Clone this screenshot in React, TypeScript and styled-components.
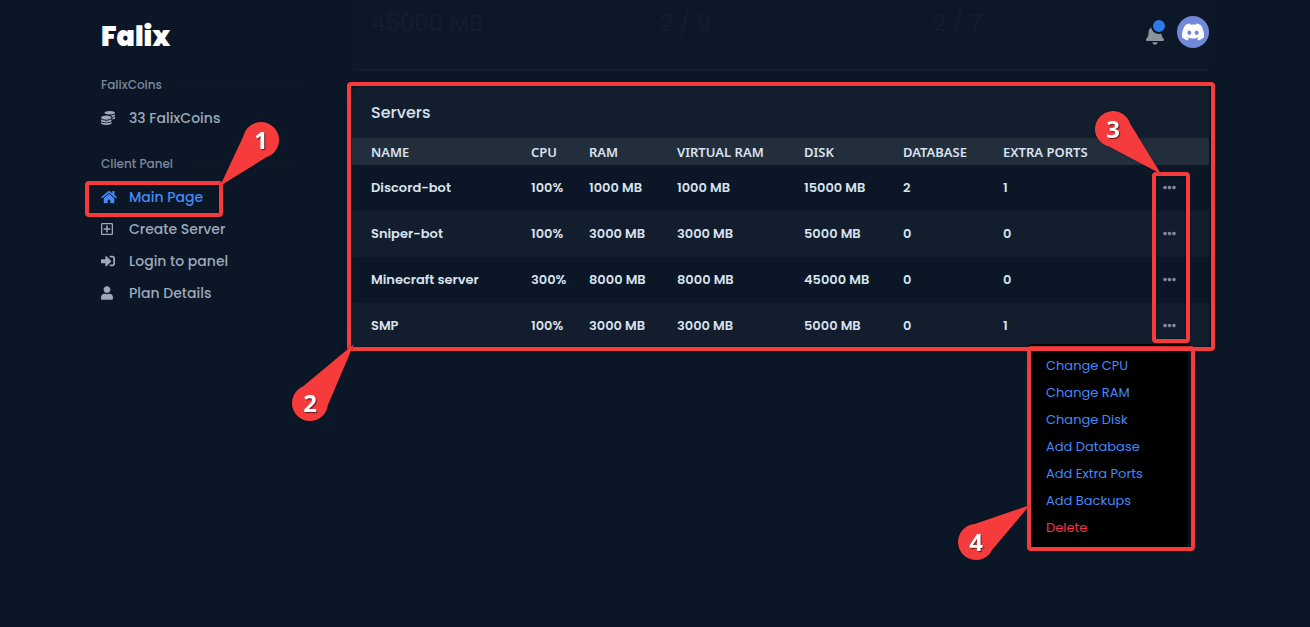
import React from "react";
import styled, { createGlobalStyle, css } from "styled-components";
import {
  FaBell,
  FaCoins,
  FaDiscord,
  FaEllipsisH,
  FaHome,
  FaRegPlusSquare,
  FaSignInAlt,
  FaUser,
} from "react-icons/fa";
import type { IconType } from "react-icons";

const colors = {
  page: "#0b1727",
  stat: "#0c1828",
  statText: "#121e2d",
  card: "#121e2d",
  head: "#232e3c",
  text: "#d8e2ef",
  nav: "#9da9bb",
  label: "#7b889b",
  primary: "#4489f7",
  danger: "#f5334f",
  mark: "#f53b3b",
};

const GlobalStyle = createGlobalStyle`
  *, *::before, *::after { box-sizing: border-box; }
  body {
    margin: 0;
    background: ${colors.page};
    color: ${colors.text};
    font-family: Poppins, Inter, "Liberation Sans", sans-serif;
    font-size: 13px;
    line-height: 20px;
  }
`;

const Page = styled.div`
  display: flex;
  align-items: flex-start;
  gap: 52px;
  max-width: 1440px;
  min-height: 100vh;
  margin: 0 auto;
  padding: 0 101px;
`;

const Sidebar = styled.aside`
  flex: 0 0 199px;
`;

const Logo = styled.a`
  display: flex;
  align-items: center;
  height: 72px;
  padding-top: 2px;
  color: #fff;
  font-size: 27px;
  font-weight: 900;
  text-decoration: none;
`;

const Nav = styled.nav`
  display: flex;
  flex-direction: column;
  gap: 17px;
`;

const NavLabel = styled.h2`
  display: flex;
  align-items: center;
  gap: 16px;
  height: 26px;
  margin: 0 0 4px;
  color: ${colors.label};
  font-size: 12px;
  font-weight: 500;

  &::after {
    content: "";
    flex: 1;
    height: 1px;
    background: #111a24;
  }
`;

const NavList = styled.ul`
  margin: 0;
  padding: 0;
  list-style: none;
`;

const NavLink = styled.a<{ $active?: boolean }>`
  position: relative;
  display: flex;
  align-items: center;
  width: fit-content;
  height: 32px;
  color: ${(p) => (p.$active ? colors.primary : colors.nav)};
  font-size: 14px;
  font-weight: 500;
  text-decoration: none;
`;

const NavIcon = styled.span<{ $width: number }>`
  display: flex;
  width: 28px;

  svg {
    width: ${(p) => p.$width}px;
    height: 14px;
  }
`;

const Main = styled.main`
  position: relative;
  flex: 1;
  min-width: 0;
`;

const Stats = styled.section`
  display: grid;
  grid-template-columns: 288fr 273fr 296fr;
  height: 71px;
  margin-bottom: 15px;
  background: ${colors.stat};
  border-bottom: 2px solid ${colors.card};
  border-radius: 0 0 6px 6px;
`;

const Stat = styled.div`
  height: 37px;
  padding: 11px 19px 0;
  color: ${colors.statText};
  font-size: 23px;
  line-height: 24px;

  & + & {
    border-left: 1px solid #0e1a2a;
  }
`;

const TopBar = styled.div`
  position: absolute;
  top: 0;
  right: 0;
  display: flex;
  align-items: center;
  gap: 13px;
  height: 64px;
`;

const RoundButton = styled.button`
  position: relative;
  display: flex;
  align-items: center;
  justify-content: center;
  padding: 0;
  border: 0;
  background: none;
  color: #8d939c;
  cursor: pointer;
`;

const BellButton = styled(RoundButton)`
  padding-top: 5px;

  svg {
    width: 18px;
    height: 21px;
  }
`;

const UnreadDot = styled.span`
  position: absolute;
  top: -1px;
  right: -3px;
  width: 16px;
  height: 16px;
  border: 2px solid ${colors.page};
  border-radius: 50%;
  background: #2c7be5;
`;

const Avatar = styled(RoundButton)`
  width: 32px;
  height: 32px;
  border-radius: 50%;
  background: #7289da;
  color: #fff;
`;

const Card = styled.section`
  position: relative;
  border-radius: 6px;
  background: ${colors.card};
  box-shadow: 0 7px 14px rgba(0, 0, 0, 0.12);
`;

const CardTitle = styled.h1`
  display: flex;
  align-items: center;
  height: 52px;
  margin: 0;
  padding: 2px 19px 0;
  font-size: 16px;
  font-weight: 500;
`;

const TableArea = styled.div`
  position: relative;
`;

const Table = styled.table`
  width: 100%;
  border-collapse: collapse;
  table-layout: fixed;

  th,
  td {
    padding: 0 0 0 12px;
    text-align: left;
    white-space: nowrap;
  }

  th:first-child,
  td:first-child {
    padding-left: 19px;
  }
`;

const HeadCell = styled.th`
  height: 27px;
  background: ${colors.head};
  font-family: "Noto Sans", "Open Sans", sans-serif;
  font-size: 13px;
  font-weight: 600;
  line-height: 18px;
  text-transform: uppercase;
`;

const Row = styled.tr`
  height: 46px;
  font-weight: 600;

  &:nth-child(odd) {
    background: ${colors.page};
  }
`;

const MoreButton = styled(RoundButton)`
  height: 20px;
  padding-bottom: 2px;
  color: #7d899b;

  svg {
    width: 13px;
    height: 13px;
  }
`;

const Menu = styled.div`
  position: absolute;
  top: calc(100% - 5px);
  right: 21px;
  width: 160px;
  padding: 8px 0 7px;
  border-radius: 4px;
  background: #000;
  box-shadow: 3px 0 0 #0c1220;
`;

const MenuItem = styled.button<{ $danger?: boolean }>`
  display: block;
  width: 100%;
  height: 27px;
  padding: 0 18px;
  border: 0;
  background: none;
  color: ${(p) => (p.$danger ? colors.danger : colors.primary)};
  font: inherit;
  text-align: left;
  cursor: pointer;
`;

const outlines = {
  link: css`inset: 0 -20px -4px -16px;`,
  card: css`inset: -4px -6px -2px -5px;`,
  column: css`inset: 34px 19px 6px auto; width: 38px;`,
  menu: css`inset: 2px -7px -3px -1px;`,
};

const Outline = styled.span<{ $around: keyof typeof outlines }>`
  position: absolute;
  z-index: 1;
  ${(p) => outlines[p.$around]}
  border: 4px solid ${colors.mark};
  border-radius: 4px;
  box-shadow: inset 0 0 2px rgba(0, 0, 0, 0.6);
  pointer-events: none;
`;

const Pin = styled.svg<{ $left: string; $top: string }>`
  position: absolute;
  z-index: 2;
  left: calc(${(p) => p.$left} - 4px);
  top: calc(${(p) => p.$top} - 4px);
  width: 160px;
  height: 160px;
  transform: translate(-50%, -50%);
  overflow: visible;
  filter: drop-shadow(0 0 1px rgba(0, 0, 0, 0.4));
  pointer-events: none;

  path {
    fill: ${colors.mark};
  }

  text {
    fill: #fff;
    font: 700 24px "Open Sans", "Noto Sans", sans-serif;
    text-anchor: middle;
    text-shadow: 1px 1px 1px rgba(0, 0, 0, 0.6);
  }
`;

type CalloutProps = {
  n: number;
  left: string;
  top: string;
  dx: number;
  dy: number;
};

/* Numbered drop whose tip is at (left, top) and whose head is (dx, dy) away. */
function Callout({ n, left, top, dx, dy }: CalloutProps) {
  const r = 18;
  const axis = Math.atan2(-dy, -dx);
  const spread = Math.PI / 3;
  const at = (angle: number) =>
    `${dx + r * Math.cos(angle)} ${dy + r * Math.sin(angle)}`;
  return (
    <Pin $left={left} $top={top} viewBox="-80 -80 160 160">
      <path
        d={`M0 0L${at(axis + spread)}A${r} ${r} 0 1 1 ${at(axis - spread)}Z`}
      />
      <text x={dx} y={dy + 9}>
        {n}
      </text>
    </Pin>
  );
}

type Link = {
  label: string;
  icon: IconType;
  iconWidth: number;
  active?: boolean;
};

const groups: { title: string; links: Link[] }[] = [
  {
    title: "FalixCoins",
    links: [{ label: "33 FalixCoins", icon: FaCoins, iconWidth: 14 }],
  },
  {
    title: "Client Panel",
    links: [
      { label: "Main Page", icon: FaHome, iconWidth: 16, active: true },
      { label: "Create Server", icon: FaRegPlusSquare, iconWidth: 12 },
      { label: "Login to panel", icon: FaSignInAlt, iconWidth: 14 },
      { label: "Plan Details", icon: FaUser, iconWidth: 12 },
    ],
  },
];

const columns = [
  { title: "Name", width: 167 },
  { title: "CPU", width: 58 },
  { title: "RAM", width: 88 },
  { title: "Virtual RAM", width: 127 },
  { title: "Disk", width: 99 },
  { title: "Database", width: 100 },
  { title: "Extra Ports", width: 160 },
  { title: "", width: 58 },
];

const servers = [
  ["Discord-bot", "100%", "1000 MB", "1000 MB", "15000 MB", "2", "1"],
  ["Sniper-bot", "100%", "3000 MB", "3000 MB", "5000 MB", "0", "0"],
  ["Minecraft server", "300%", "8000 MB", "8000 MB", "45000 MB", "0", "0"],
  ["SMP", "100%", "3000 MB", "3000 MB", "5000 MB", "0", "1"],
];

const actions = [
  "Change CPU",
  "Change RAM",
  "Change Disk",
  "Add Database",
  "Add Extra Ports",
  "Add Backups",
  "Delete",
];

export default function App() {
  return (
    <>
      <GlobalStyle />
      <Page>
        <Sidebar>
          <Logo href="#">Falix</Logo>
          <Nav>
            {groups.map((group) => (
              <div key={group.title}>
                <NavLabel>{group.title}</NavLabel>
                <NavList>
                  {group.links.map(({ label, icon: Icon, iconWidth, active }) => (
                    <li key={label}>
                      <NavLink href="#" $active={active}>
                        <NavIcon $width={iconWidth}>
                          <Icon />
                        </NavIcon>
                        {label}
                        {active && (
                          <Outline $around="link">
                            <Callout n={1} left="calc(100% + 5px)" top="5px" dx={41} dy={-46} />
                          </Outline>
                        )}
                      </NavLink>
                    </li>
                  ))}
                </NavList>
              </div>
            ))}
          </Nav>
        </Sidebar>

        <Main>
          <Stats>
            <Stat>45000 MB</Stat>
            <Stat>2 / 9</Stat>
            <Stat>2 / 7</Stat>
          </Stats>
          <TopBar>
            <BellButton aria-label="Notifications">
              <FaBell />
              <UnreadDot />
            </BellButton>
            <Avatar aria-label="Account">
              <FaDiscord size={24} />
            </Avatar>
          </TopBar>

          <Card>
            <CardTitle>Servers</CardTitle>
            <TableArea>
              <Table>
                <colgroup>
                  {columns.map((c) => (
                    <col key={c.title} width={c.width} />
                  ))}
                </colgroup>
                <thead>
                  <tr>
                    {columns.map((c) => (
                      <HeadCell key={c.title}>{c.title}</HeadCell>
                    ))}
                  </tr>
                </thead>
                <tbody>
                  {servers.map((server) => (
                    <Row key={server[0]}>
                      {server.map((value, i) => (
                        <td key={i}>{value}</td>
                      ))}
                      <td>
                        <MoreButton aria-label={`Actions for ${server[0]}`}>
                          <FaEllipsisH />
                        </MoreButton>
                      </td>
                    </Row>
                  ))}
                </tbody>
              </Table>
              <Outline $around="column">
                <Callout n={3} left="9px" top="2px" dx={-48} dy={-45} />
              </Outline>
              <Menu>
                {actions.map((action) => (
                  <MenuItem key={action} $danger={action === "Delete"}>
                    {action}
                  </MenuItem>
                ))}
                <Outline $around="menu">
                  <Callout n={4} left="3px" top="calc(100% - 38px)" dx={-54} dy={37} />
                </Outline>
              </Menu>
            </TableArea>
            <Outline $around="card">
              <Callout n={2} left="7px" top="calc(100% + 1px)" dx={-44} dy={59} />
            </Outline>
          </Card>
        </Main>
      </Page>
    </>
  );
}
